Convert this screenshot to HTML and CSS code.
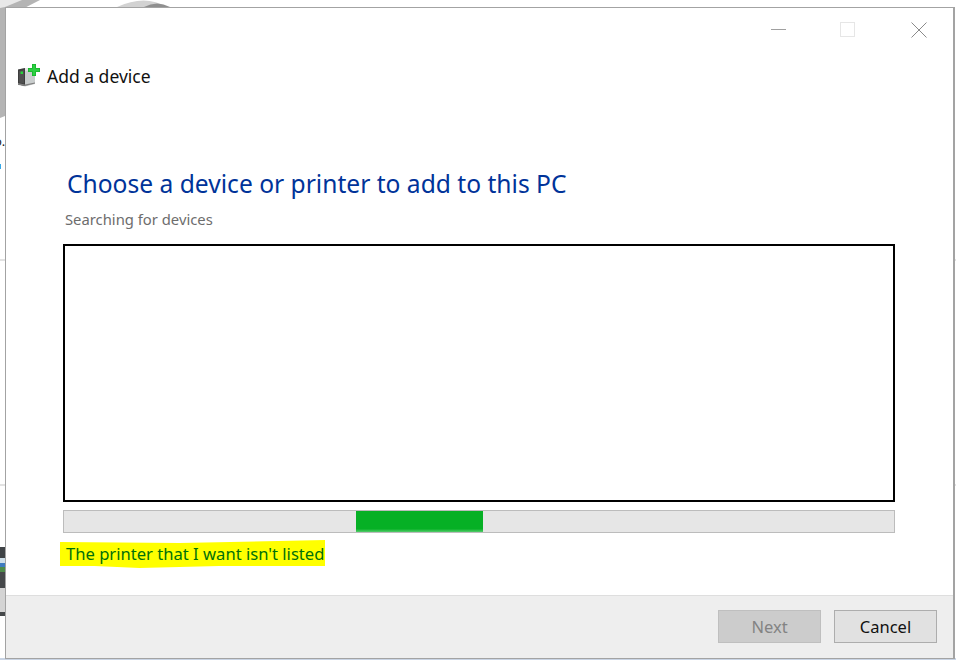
FILE: index.html
```html
<!DOCTYPE html>
<html lang="en">
<head>
<meta charset="utf-8">
<title>Add a device</title>
<link rel="stylesheet" href="styles.css">
</head>
<body>
<div class="desktop">
  <svg class="backdrop" width="956" height="660" viewBox="0 0 956 660" aria-hidden="true">
    <polygon points="0,0 40,0 5,18 5,116 0,118" fill="#b4b4b4"/>
    <polygon points="0,0 22,0 5,7 0,8" fill="#e8e8e8"/>
    <path d="M117 7 Q145 -6 167 7 Z" fill="#d2d2d2"/>
    <path d="M144 7 Q157 0 170 7 Z" fill="#8f8f8f"/>
    <rect x="0" y="259" width="5" height="2" fill="#e2e2e2"/>
    <rect x="0" y="484" width="5" height="2" fill="#e2e2e2"/>
    <rect x="954" y="259" width="2" height="2" fill="#e2e2e2"/>
    <rect x="954" y="484" width="2" height="2" fill="#e2e2e2"/>
    <rect x="0" y="547" width="5" height="11" fill="#3f4346"/>
    <rect x="0" y="558" width="5" height="5" fill="#cfe0ea"/>
    <rect x="0" y="563" width="5" height="4" fill="#3f7cc0"/>
    <rect x="0" y="567" width="5" height="5" fill="#4e8c4a"/>
    <rect x="0" y="572" width="5" height="16" fill="#45484a"/>
    <rect x="0" y="588" width="5" height="24" fill="#d4d4d4"/>
    <rect x="0" y="612" width="5" height="4" fill="#45484a"/>
    <rect x="0" y="658" width="956" height="2" fill="#c9d4e4"/>
  </svg>
  <span class="stray stray-letter">o.</span>
  <span class="stray stray-dot"></span>

  <section class="window">
    <div class="controls">
      <span class="minimize"></span>
      <span class="restore"></span>
      <svg class="close" width="16" height="16" viewBox="0 0 16 16" aria-hidden="true">
        <path d="M.5.5l15 15M15.5.5l-15 15" stroke="#8a8a8a" stroke-width="1" fill="none"/>
      </svg>
    </div>
    <header class="heading">
      <svg class="device-icon" width="24" height="24" viewBox="0 0 24 24" aria-hidden="true">
        <path d="M1 6.500l7-1.500 10 1v15l-10 2.500-7-1.500z" fill="#c9cdcd"/>
        <path d="M1 6.500l7-1.500v18l-7-1.500z" fill="#3d3d3d"/>
        <path d="M2 8l5-1v13.500l-5-1z" fill="#4f4f4f"/>
        <path d="M8 5l10 1v2l-10-.5z" fill="#e8e8e8"/>
        <path d="M1 21.500l7 1.500 10-2.500v-1l-10 2-7-1.500z" fill="#808080"/>
        <rect x="3.500" y="8.500" width="2.500" height="2.500" fill="#27d53a"/>
        <path d="M15 1h4v4h4v4h-4v4h-4V9h-4V5h4z" fill="#17b52c"/>
        <path d="M15.800 1.800h2.400v4h4v2.400h-4v4h-2.400v-4h-4V5.800h4z" fill="#2ccf42"/>
      </svg>
      <span class="heading-text">Add a device</span>
    </header>
    <main class="content">
      <h1 class="title">Choose a device or printer to add to this PC</h1>
      <p class="status">Searching for devices</p>
      <div class="device-list"></div>
      <div class="progress"><div class="progress-fill"></div></div>
      <a class="missing" href="#"><span class="missing-text">The printer that I want isn't listed</span></a>
    </main>
    <footer class="actions">
      <button class="btn btn-disabled" type="button" disabled>Next</button>
      <button class="btn" type="button">Cancel</button>
    </footer>
  </section>
</div>
</body>
</html>
```

FILE: styles.css
```css
* { box-sizing: border-box; }

html, body {
  margin: 0;
  padding: 0;
  background: #fff;
}

body {
  font-family: "Noto Sans", "Open Sans", "Liberation Sans", sans-serif;
}

.desktop {
  position: relative;
  width: 956px;
  height: 660px;
  overflow: hidden;
}

.backdrop {
  position: absolute;
  left: 0;
  top: 0;
}

.stray {
  position: absolute;
}

.stray-letter {
  left: -6px;
  top: 132px;
  font-size: 13px;
  line-height: 18px;
  color: #222;
}

.stray-dot {
  left: 0;
  top: 164px;
  width: 1px;
  height: 5px;
  background: #35a8e8;
}

.window {
  position: absolute;
  left: 5px;
  top: 7px;
  width: 950px;
  height: 652px;
  display: flex;
  flex-direction: column;
  background: #fff;
  border: 1px solid #a3a3a3;
  border-right-width: 2px;
}

.controls {
  height: 50px;
  flex: none;
  display: flex;
  align-items: flex-start;
  padding: 14px 0 0 765px;
}

.minimize {
  width: 15px;
  height: 1px;
  margin-top: 7px;
  background: #a0a0a0;
}

.restore {
  width: 15px;
  height: 15px;
  margin-left: 54px;
  border: 1px solid #e6e6e6;
}

.close {
  margin-left: 56px;
}

.heading {
  flex: none;
  display: flex;
  align-items: center;
  height: 36px;
  padding-left: 11px;
}

.device-icon {
  flex: none;
  margin-top: -2px;
}

.heading-text {
  margin-left: 6px;
  font-size: 17.500px;
  line-height: 24px;
  color: #111;
}

.content {
  flex: 1;
  min-height: 0;
  display: flex;
  flex-direction: column;
  padding: 0 58px 0 57px;
}

.title {
  margin: 73px 0 0 4px;
  font-size: 24.600px;
  line-height: 34px;
  font-weight: 400;
  color: #003399;
  white-space: nowrap;
}

.status {
  margin: 8px 0 0 2px;
  font-size: 14.800px;
  line-height: 20px;
  color: #6d6d6d;
}

.device-list {
  height: 258px;
  margin-top: 15px;
  border: 2px solid #000;
  background: #fff;
}

.progress {
  height: 23px;
  margin-top: 8px;
  padding-left: 292px;
  border: 1px solid #bcbcbc;
  background: #e6e6e6;
}

.progress-fill {
  width: 127px;
  height: 100%;
  background: linear-gradient(#06b025 85%, #55cc6c);
}

.missing {
  align-self: flex-start;
  margin: 7px 0 0 -3px;
  text-decoration: none;
}

.missing-text {
  display: block;
  padding: 3px 1px 3px 6px;
  font-size: 16.600px;
  line-height: 22px;
  color: #00700a;
  background: #ffff00;
  white-space: nowrap;
  clip-path: polygon(0 2px, 45% 3px, 100% 0, 100% 26px, 60% 26px, 30% 28px, 13% 26px, 0 26px);
}

.actions {
  flex: none;
  height: 63px;
  display: flex;
  justify-content: flex-end;
  gap: 13px;
  padding: 14px 16px 0 0;
  margin-top: auto;
  background: #eeeeee;
  border-top: 1px solid #dedede;
}

.btn {
  width: 103px;
  height: 33px;
  padding: 1px 0 0;
  font-family: inherit;
  font-size: 16.500px;
  line-height: 22px;
  color: #111;
  background: #e1e1e1;
  border: 1px solid #adadad;
}

.btn-disabled {
  color: #838383;
  background: #cccccc;
  border-color: #bfbfbf;
}
```
